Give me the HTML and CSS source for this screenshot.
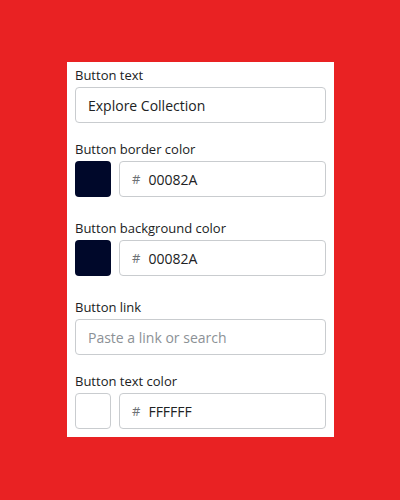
FILE: index.html
```html
<!DOCTYPE html>
<html>
<head>
<meta charset="utf-8">
<link rel="stylesheet" href="styles.css">
</head>
<body>
<div class="panel">
  <div class="field">
    <label class="label">Button text</label>
    <div class="input"><span class="value">Explore Collection</span></div>
  </div>
  <div class="field color-field">
    <label class="label">Button border color</label>
    <div class="color-row">
      <div class="swatch dark"></div>
      <div class="input hex"><span class="hash">#</span><span class="value">00082A</span></div>
    </div>
  </div>
  <div class="field color-field">
    <label class="label">Button background color</label>
    <div class="color-row">
      <div class="swatch dark"></div>
      <div class="input hex"><span class="hash">#</span><span class="value">00082A</span></div>
    </div>
  </div>
  <div class="field">
    <label class="label">Button link</label>
    <div class="input"><span class="placeholder">Paste a link or search</span></div>
  </div>
  <div class="field color-field last">
    <label class="label">Button text color</label>
    <div class="color-row">
      <div class="swatch light"></div>
      <div class="input hex"><span class="hash">#</span><span class="value">FFFFFF</span></div>
    </div>
  </div>
</div>
</body>
</html>
```
FILE: styles.css
```css
html, body {
  margin: 0;
  padding: 0;
}
body {
  background: #e92223;
  width: 400px;
  height: 500px;
  font-family: "Open Sans", "Noto Sans", sans-serif;
  color: #202223;
}
.panel {
  margin: 62px 0 0 67px;
  width: 267px;
  box-sizing: border-box;
  background: #ffffff;
  padding: 3px 8px 8px 8px;
}
.field {
  display: flex;
  flex-direction: column;
  margin-bottom: 16px;
}
.field.color-field {
  margin-bottom: 21px;
}
.field.last {
  margin-bottom: 0;
}
.label {
  font-size: 13px;
  line-height: 20px;
  margin-bottom: 2px;
  color: #202223;
}
.color-row {
  display: flex;
  gap: 8px;
}
.input {
  height: 36px;
  flex: none;
  box-sizing: border-box;
  border: 1px solid #c9cccf;
  border-radius: 4px;
  display: flex;
  align-items: center;
  padding: 0 12px;
  font-size: 14px;
}
.input.hex {
  flex: 1 1 auto;
}
.swatch {
  width: 36px;
  height: 36px;
  box-sizing: border-box;
  border-radius: 4px;
  flex: none;
}
.swatch.dark {
  background: #00082a;
}
.swatch.light {
  background: #ffffff;
  border: 1px solid #c9cccf;
}
.hash {
  color: #6d7175;
  font-size: 13px;
  margin-right: 8px;
}
.value {
  color: #202223;
}
.placeholder {
  color: #8c9196;
}
```
